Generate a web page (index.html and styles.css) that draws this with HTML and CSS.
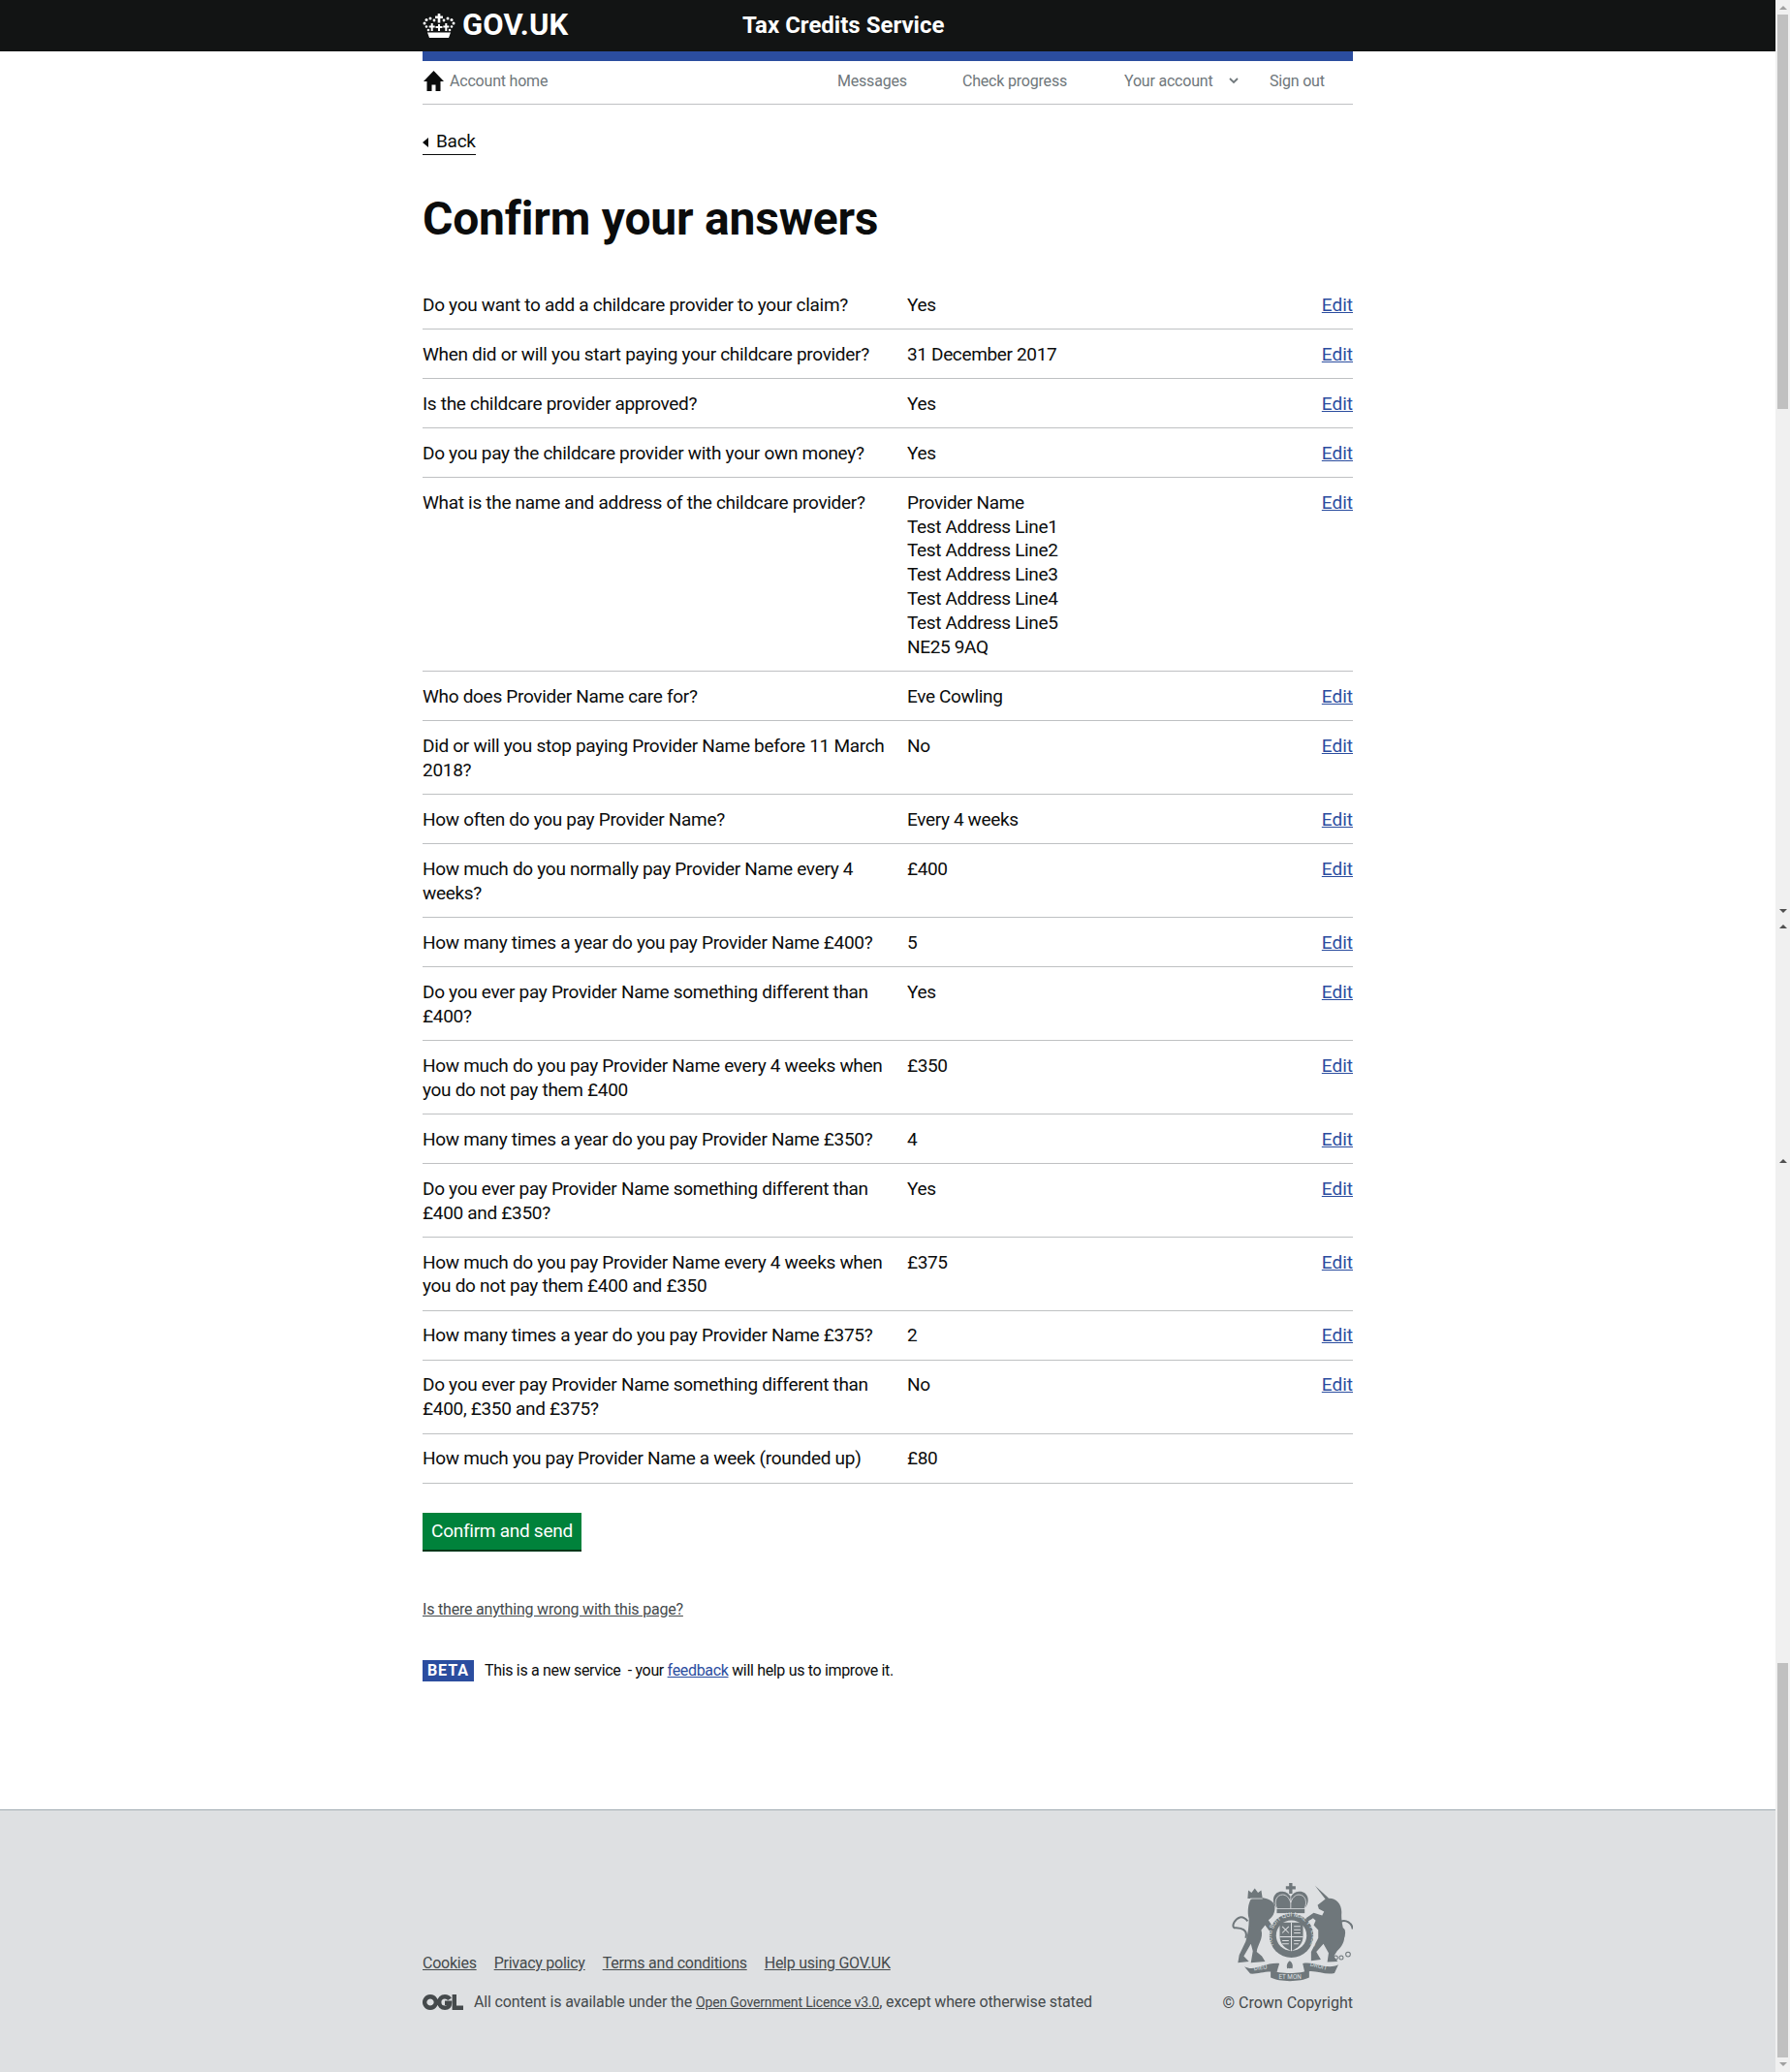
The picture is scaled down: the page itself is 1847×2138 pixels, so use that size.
FILE: index.html
```html
<!DOCTYPE html>
<html lang="en">
<head>
    <meta charset="utf-8">
    <title>Confirm your answers</title>
    <link rel="stylesheet" href="styles.css">
</head>
<body>
<div class="page">
<div class="viewport">

<header class="topbar">
    <div class="wrap topbar_in">
        <a class="logo" href="#">
            <svg class="crown" viewBox="0 0 34 25" width="34" height="25">
                <g fill="#fff">
                    <path d="M15.700 0h2.600v2.500H21V5h-2.700v4.500h-2.600V5H13V2.500h2.700z"/>
                    <circle cx="2" cy="10" r="1.500"/><circle cx="4" cy="6.500" r="1.500"/><circle cx="8" cy="5" r="1.500"/><circle cx="12" cy="7" r="1.400"/>
                    <circle cx="32" cy="10" r="1.500"/><circle cx="30" cy="6.500" r="1.500"/><circle cx="26" cy="5" r="1.500"/><circle cx="22" cy="7" r="1.400"/>
                    <circle cx="4" cy="13.500" r="1.300"/><circle cx="30" cy="13.500" r="1.300"/><circle cx="6" cy="17" r="1.300"/><circle cx="28" cy="17" r="1.300"/>
                    <path d="M8.700 10h2v2.500h2v2h-2V18h-2v-3.500h-2v-2h2zM16 11h2v2h2.500v2H18v3h-2v-3h-2.500v-2H16zM23.300 10h2v2.500h2v2h-2V18h-2v-3.500h-2v-2h2z"/>
                    <path d="M5 19.500h24L27 25H7z"/>
                </g>
            </svg>
            <span>GOV.UK</span>
        </a>
        <span class="service">Tax Credits Service</span>
    </div>
</header>

<div class="wrap">
    <div class="phase_bar"></div>
    <nav class="account_nav">
        <a class="home_link" href="#">
            <svg viewBox="0 0 21 21" width="21" height="21"><path fill="#0b0c0c" d="M10.500 0 0 11h3.500v10h5v-6.500h4V21h5V11H21z"/></svg>
            <span>Account home</span>
        </a>
        <a class="nav_messages" href="#">Messages</a>
        <a class="nav_progress" href="#">Check progress</a>
        <a class="nav_account" href="#">Your account<svg viewBox="0 0 10 7" width="10" height="7"><path fill="none" stroke="#6f777b" stroke-width="1.800" d="M1 1l4 4 4-4"/></svg></a>
        <a class="nav_signout" href="#">Sign out</a>
    </nav>

    <a class="back_link" href="#">Back</a>

    <h1>Confirm your answers</h1>

    <dl class="answers">
        <div class="row"><dt>Do you want to add a childcare provider to your claim?</dt><dd>Yes</dd><a href="#">Edit</a></div>
        <div class="row"><dt>When did or will you start paying your childcare provider?</dt><dd>31 December 2017</dd><a href="#">Edit</a></div>
        <div class="row"><dt>Is the childcare provider approved?</dt><dd>Yes</dd><a href="#">Edit</a></div>
        <div class="row"><dt>Do you pay the childcare provider with your own money?</dt><dd>Yes</dd><a href="#">Edit</a></div>
        <div class="row"><dt>What is the name and address of the childcare provider?</dt><dd>Provider Name<br>Test Address Line1<br>Test Address Line2<br>Test Address Line3<br>Test Address Line4<br>Test Address Line5<br>NE25 9AQ</dd><a href="#">Edit</a></div>
        <div class="row"><dt>Who does Provider Name care for?</dt><dd>Eve Cowling</dd><a href="#">Edit</a></div>
        <div class="row"><dt>Did or will you stop paying Provider Name before 11 March 2018?</dt><dd>No</dd><a href="#">Edit</a></div>
        <div class="row"><dt>How often do you pay Provider Name?</dt><dd>Every 4 weeks</dd><a href="#">Edit</a></div>
        <div class="row"><dt>How much do you normally pay Provider Name every 4 weeks?</dt><dd>£400</dd><a href="#">Edit</a></div>
        <div class="row"><dt>How many times a year do you pay Provider Name £400?</dt><dd>5</dd><a href="#">Edit</a></div>
        <div class="row"><dt>Do you ever pay Provider Name something different than £400?</dt><dd>Yes</dd><a href="#">Edit</a></div>
        <div class="row"><dt>How much do you pay Provider Name every 4 weeks when you do not pay them £400</dt><dd>£350</dd><a href="#">Edit</a></div>
        <div class="row"><dt>How many times a year do you pay Provider Name £350?</dt><dd>4</dd><a href="#">Edit</a></div>
        <div class="row"><dt>Do you ever pay Provider Name something different than £400 and £350?</dt><dd>Yes</dd><a href="#">Edit</a></div>
        <div class="row"><dt>How much do you pay Provider Name every 4 weeks when you do not pay them £400 and £350</dt><dd>£375</dd><a href="#">Edit</a></div>
        <div class="row"><dt>How many times a year do you pay Provider Name £375?</dt><dd>2</dd><a href="#">Edit</a></div>
        <div class="row"><dt>Do you ever pay Provider Name something different than £400, £350 and £375?</dt><dd>No</dd><a href="#">Edit</a></div>
        <div class="row"><dt>How much you pay Provider Name a week (rounded up)</dt><dd>£80</dd></div>
    </dl>

    <a class="button" href="#">Confirm and send</a>

    <a class="wrong_link" href="#">Is there anything wrong with this page?</a>

    <p class="beta"><strong>BETA</strong><span>This is a new service &nbsp;- your <a href="#">feedback</a> will help us to improve it.</span></p>
</div>

<footer class="footer">
    <div class="wrap footer_in">
        <div class="footer_left">
            <ul class="footer_links">
                <li><a href="#">Cookies</a></li>
                <li><a href="#">Privacy policy</a></li>
                <li><a href="#">Terms and conditions</a></li>
                <li><a href="#">Help using GOV.UK</a></li>
            </ul>
            <p class="licence">
                <svg viewBox="0 0 42 16" width="42" height="16"><path fill="none" stroke="#454a4c" stroke-width="4.400" d="M8 2.200a5.800 5.800 0 1 0 .01 0zM28 4.800c-1-1.700-2.800-2.600-5-2.600a5.800 5.800 0 0 0 0 11.600c3 0 5-1.600 5-5h-5M32.800 0v13.800H42"/></svg>
                <span>All content is available under the <a href="#">Open Government Licence v3.0</a>, except where otherwise stated</span>
            </p>
        </div>
        <div class="copyright">
            <svg class="crest" viewBox="93 70 374 308" width="125" height="103">
                <defs><path id="garter" d="M222 262a62 62 0 1 1 112 0"/></defs>
                <g fill="#6f777b">
                    <!-- lion -->
                    <path d="M144 92l10 8 10-14 10 14 10-8 4 26h-46z"/>
                    <path d="M152 120c13-8 53-8 70 12 10 18 0 43-16 52l20 30-14 8-16-22-12 15c8 25-12 47-14 67l16 14 10 16-44 4 6-36-6-22-22 38 16 16-34 4 4-24 20-42c8-26 10-50 10-70-6-20-2-48 6-60z"/>
                    <!-- unicorn -->
                    <path d="M350 78l42 38-8 6z"/>
                    <path d="M384 118c26-6 48 12 48 42-2 25 4 45 8 65 4 25-8 43-22 55l-10 16 12 16-32 2 4-28-16-28-22 24 14 24-30 4v-28l22-42v-25l-14-15 6-14-8-8-18 12-4-12 24-16 26 8 6-12-16-8-4-12z"/>
                    <!-- crown -->
                    <path d="M270 70h10v10h10v9h-10v14h-10V89h-10v-9h10z"/>
                    <path d="M232 148c-22-25-7-55 18-52 12 1 20 8 25 17 5-9 13-16 25-17 25-3 40 27 18 52z"/>
                    <rect x="232" y="150" width="86" height="13"/>
                    <!-- motto ribbons -->
                    <path d="M132 328c33 17 58-13 108-10l-8 27c-37-5-57 7-82 5z"/>
                    <path d="M213 338c27 14 92 14 119 0v24c-27 14-92 14-119 0z"/>
                    <path d="M312 318c38-8 73 22 110 4l-12 26c-30 8-60-13-92-3z"/>
                    <path d="M272 310c-8 5-11 14-8 24 4-2 6-2 8 0 2-2 4-2 8 0 3-10 0-19-8-24z"/>
                    <circle cx="277" cy="232" r="68"/>
                </g>
                <g fill="none" stroke="#6f777b" stroke-width="6">
                    <path d="M136 240c10-35-28-30-36-32-8-8 4-28 18-32 10-2 18 4 24 12"/>
                    <path d="M428 190c17-10 37 5 38 22M428 215c17-15 17 25-3 40"/>
                </g>
                <g fill="none" stroke="#6f777b" stroke-width="3">
                    <circle cx="402" cy="288" r="6"/><circle cx="414" cy="300" r="6"/><circle cx="431" cy="300" r="6"/><circle cx="452" cy="290" r="7"/>
                </g>
                <g fill="none" stroke="#dee0e2" stroke-width="2.500">
                    <path d="M232 148c-10-22 0-42 18-42 12 0 20 10 25 24 5-14 13-24 25-24 18 0 28 20 18 42"/>
                    <path d="M275 113v36M150 118h38"/>
                </g>
                <circle cx="277" cy="232" r="47" fill="#dee0e2"/>
                <path fill="#6f777b" d="M241 192h72v42c0 26-18 38-36 46-18-8-36-20-36-46z"/>
                <g fill="none" stroke="#dee0e2" stroke-width="3">
                    <path d="M277 192v88M241 236h72"/>
                    <path d="M249 204l20 20M269 204l-20 20M285 204h20M285 214h20M285 224h20M249 248h20M249 258h20M285 248h20M285 258h14"/>
                </g>
                <text class="crest_text"><textPath href="#garter">HONI SOIT QUI MAL Y PENSE</textPath></text>
                <text class="crest_text" x="238" y="367">ET MON</text>
                <text class="crest_text" x="162" y="340" transform="rotate(-8 162 340)">DIEU</text>
                <text class="crest_text" x="334" y="326" transform="rotate(14 334 326)">DROIT</text>
            </svg>
            <p>© Crown Copyright</p>
        </div>
    </div>
</footer>

</div>

<div class="scrollbar">
    <i class="up faded first"></i>
    <div class="thumb thumb_top"></div>
    <i class="down dark"></i>
    <i class="up dark"></i>
    <i class="up dark third"></i>
    <div class="thumb thumb_bottom"></div>
    <i class="down faded"></i>
</div>
</div>
</body>
</html>
```

FILE: styles.css
```css
* {
    box-sizing: border-box;
}
html, body {
    margin: 0;
    padding: 0;
}
body {
    font-family: Roboto, "Noto Sans", Arial, sans-serif;
    font-size: 19px;
    line-height: 25px;
    letter-spacing: -0.27px;
    color: #0b0c0c;
    background: #fff;
}
p, ul, dl, dd, h1 {
    margin: 0;
    padding: 0;
}
.page {
    display: flex;
    height: 2138px;
    overflow: hidden;
}
.viewport {
    width: 1832px;
    display: flex;
    flex-direction: column;
}
.wrap {
    width: 960px;
    margin-left: 436px;
}

/* top bar */
.topbar {
    height: 53px;
    background: #121414;
}
.topbar_in {
    display: flex;
    align-items: center;
    height: 53px;
}
.logo {
    display: flex;
    align-items: center;
    color: #fff;
    text-decoration: none;
    font-weight: 700;
    font-size: 31px;
    letter-spacing: 0.2px;
    width: 330px;
}
.logo span {
    margin-left: 7px;
    padding-bottom: 2px;
}
.service {
    color: #fff;
    font-weight: 700;
    font-size: 24px;
    letter-spacing: 0;
}
.phase_bar {
    height: 10px;
    background: #2b4d9f;
}

/* account nav */
.account_nav {
    display: flex;
    align-items: center;
    height: 45px;
    padding-bottom: 3px;
    border-bottom: 1px solid #bfc1c3;
    font-size: 16px;
    letter-spacing: -0.2px;
}
.account_nav a {
    color: #6f777b;
    text-decoration: none;
}
.home_link {
    display: flex;
    align-items: center;
    width: 428px;
    padding-left: 1px;
}
.home_link span {
    margin-left: 6px;
}
.nav_messages {
    width: 129px;
}
.nav_progress {
    width: 167px;
}
.nav_account {
    width: 150px;
}
.nav_account svg {
    margin-left: 16px;
    vertical-align: 2px;
}

.back_link {
    display: inline-block;
    margin-top: 26px;
    padding-left: 14px;
    position: relative;
    color: #0b0c0c;
    text-decoration: none;
    border-bottom: 1px solid #0b0c0c;
    line-height: 24px;
    height: 26px;
    vertical-align: top;
}
.back_link::before {
    content: "";
    position: absolute;
    left: 0;
    top: 8px;
    border: 5px solid transparent;
    border-left: 0;
    border-right: 6px solid #0b0c0c;
}
h1 {
    font-size: 48px;
    line-height: 50px;
    font-weight: 700;
    letter-spacing: -0.2px;
    margin-top: 41px;
    margin-bottom: 38px;
}

/* answers */
.row {
    display: flex;
    padding: 13.6px 0 11.5px;
    line-height: 24.9px;
    border-bottom: 1px solid #bfc1c3;
}
.row dt {
    width: 500px;
    padding-right: 20px;
    letter-spacing: -0.3px;
}
.row dd {
    flex: 1;
    letter-spacing: -0.35px;
}
.row a {
    color: #2b4d9f;
    letter-spacing: 0;
}
.button {
    display: block;
    width: 164px;
    height: 40px;
    margin-top: 30.2px;
    background: #00823b;
    border-bottom: 2px solid #003618;
    color: #fff;
    text-align: center;
    text-decoration: none;
    line-height: 38px;
}
.wrong_link {
    display: block;
    margin-top: 50px;
    font-size: 16px;
    letter-spacing: -0.2px;
    line-height: 20px;
    color: #454a4c;
}
.beta {
    display: flex;
    align-items: center;
    margin-top: 42px;
    font-size: 16px;
    letter-spacing: -0.33px;
    line-height: 22px;
}
.beta strong {
    display: block;
    width: 53px;
    height: 22px;
    background: #2b4d9f;
    color: #fff;
    text-align: center;
    font-size: 16px;
    letter-spacing: 1px;
    margin-right: 11px;
}
.beta a {
    color: #2b4d9f;
}

/* footer */
.footer {
    margin-top: 132px;
    flex: 1;
    background: #dee0e2;
    border-top: 1px solid #a1acb2;
}
.footer_in {
    display: flex;
    justify-content: space-between;
    align-items: flex-end;
    padding-top: 75px;
}
.footer_links {
    display: flex;
    list-style: none;
    gap: 18px;
    font-size: 16px;
    letter-spacing: -0.25px;
}
.footer_links a, .licence a {
    color: #454a4c;
}
.licence {
    display: flex;
    align-items: center;
    color: #454a4c;
    font-size: 16px;
    letter-spacing: -0.15px;
    margin-top: 15px;
}
.licence svg {
    margin-right: 11px;
}
.licence a {
    font-size: 14px;
}
.copyright {
    display: flex;
    flex-direction: column;
    align-items: flex-end;
    color: #454a4c;
    font-size: 16px;
    letter-spacing: 0;
}
.crest {
    display: block;
    margin-bottom: 8px;
}
.crest_text {
    font-family: Roboto, sans-serif;
    font-size: 19px;
    letter-spacing: 0;
    fill: #dee0e2;
}

/* window scrollbars, two stitched captures */
.scrollbar {
    width: 15px;
    background: #f0f0f0;
    display: flex;
    flex-direction: column;
    align-items: center;
}
.scrollbar i {
    display: block;
    border-left: 4px solid transparent;
    border-right: 4px solid transparent;
}
.up {
    border-bottom: 4px solid #505050;
}
.down {
    border-top: 4px solid #505050;
}
.up.faded {
    border-bottom-color: #a0a0a0;
}
.down.faded {
    border-top-color: #a0a0a0;
    margin-top: 5px;
}
.first {
    margin-top: 6px;
}
.thumb {
    width: 11px;
    background: #c0c0c0;
}
.thumb_top {
    height: 407px;
    margin-top: 5px;
}
.down.dark {
    margin-top: 516px;
}
.up.dark {
    margin-top: 12px;
}
.up.third {
    margin-top: 238px;
}
.thumb_bottom {
    height: 407px;
    margin-top: 516px;
}
```
